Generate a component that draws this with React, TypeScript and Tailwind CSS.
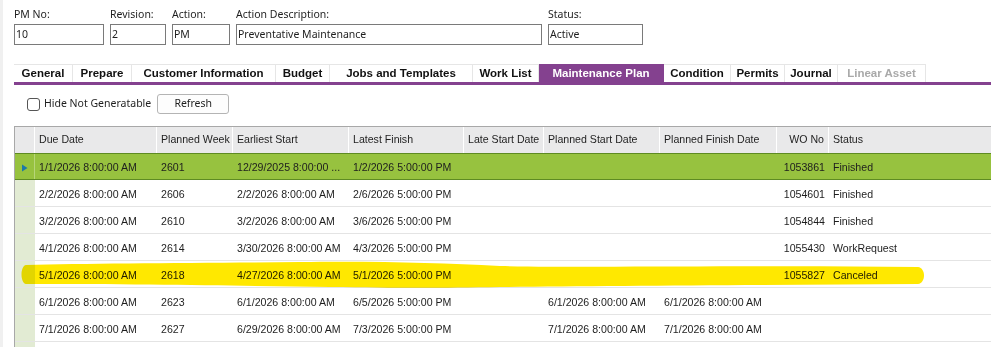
import React from "react";

const labelFont = { fontFamily: '"Noto Sans", "Open Sans", sans-serif' };

type Field = { label: string; value: string; w: string };

const fields: Field[] = [
    { label: "PM No:", value: "10", w: "w-[90px]" },
    { label: "Revision:", value: "2", w: "w-[56px]" },
    { label: "Action:", value: "PM", w: "w-[58px]" },
    { label: "Action Description:", value: "Preventative Maintenance", w: "w-[306px]" },
    { label: "Status:", value: "Active", w: "w-[95px]" },
];

const tabs = [
    { label: "General", w: "w-[59px]" },
    { label: "Prepare", w: "w-[59px]" },
    { label: "Customer Information", w: "w-[144px]" },
    { label: "Budget", w: "w-[54px]" },
    { label: "Jobs and Templates", w: "w-[143px]" },
    { label: "Work List", w: "w-[66px]" },
    { label: "Maintenance Plan", w: "w-[125px]", active: true },
    { label: "Condition", w: "w-[67px]" },
    { label: "Permits", w: "w-[54px]" },
    { label: "Journal", w: "w-[53px]" },
    { label: "Linear Asset", w: "w-[88px]", disabled: true },
];

const cols = "grid grid-cols-[20px_122px_76px_116px_115px_80px_116px_117px_52px_1fr]";

const headers = [
    "Due Date",
    "Planned Week",
    "Earliest Start",
    "Latest Finish",
    "Late Start Date",
    "Planned Start Date",
    "Planned Finish Date",
    "WO No",
    "Status",
];

// due, week, earliest, latest, lateStart, plannedStart, plannedFinish, wo, status
const rows: string[][] = [
    ["1/1/2026 8:00:00 AM", "2601", "12/29/2025 8:00:00 ...", "1/2/2026 5:00:00 PM", "", "", "", "1053861", "Finished"],
    ["2/2/2026 8:00:00 AM", "2606", "2/2/2026 8:00:00 AM", "2/6/2026 5:00:00 PM", "", "", "", "1054601", "Finished"],
    ["3/2/2026 8:00:00 AM", "2610", "3/2/2026 8:00:00 AM", "3/6/2026 5:00:00 PM", "", "", "", "1054844", "Finished"],
    ["4/1/2026 8:00:00 AM", "2614", "3/30/2026 8:00:00 AM", "4/3/2026 5:00:00 PM", "", "", "", "1055430", "WorkRequest"],
    ["5/1/2026 8:00:00 AM", "2618", "4/27/2026 8:00:00 AM", "5/1/2026 5:00:00 PM", "", "", "", "1055827", "Canceled"],
    ["6/1/2026 8:00:00 AM", "2623", "6/1/2026 8:00:00 AM", "6/5/2026 5:00:00 PM", "", "6/1/2026 8:00:00 AM", "6/1/2026 8:00:00 AM", "", ""],
    ["7/1/2026 8:00:00 AM", "2627", "6/29/2026 8:00:00 AM", "7/3/2026 5:00:00 PM", "", "7/1/2026 8:00:00 AM", "7/1/2026 8:00:00 AM", "", ""],
    ["", "", "", "", "", "", "", "", ""],
];

export default function App() {
    return (
        <div
            className="relative w-[991px] h-[347px] overflow-hidden bg-white flex text-[#1e1e1e]"
            style={{ fontFamily: '"Liberation Sans", Arial, sans-serif' }}
        >
            {/* left window edge */}
            <div className="w-[3px] shrink-0 bg-[#f0f0f0]" />

            <div className="flex-1 flex flex-col pl-[11px]">
                {/* ===== header fields ===== */}
                <div className="flex gap-[6px] pt-[7px]" style={labelFont}>
                    {fields.map((f) => (
                        <div key={f.label} className="flex flex-col">
                            <span className="text-[10.5px] leading-[14px] h-[17px]">{f.label}</span>
                            <div className={`${f.w} h-[21px] border border-[#7a7a7a] px-[1px] text-[10.5px] leading-[19px]`}>
                                {f.value}
                            </div>
                        </div>
                    ))}
                </div>

                {/* ===== tabs ===== */}
                <div className="mt-[19px] flex border-b-[3px] border-[#84418f]">
                    {tabs.map((t) => (
                        <div
                            key={t.label}
                            className={`${t.w} h-[18px] flex items-center justify-center text-[11.5px] font-bold whitespace-nowrap border-t border-r ${
                                t.active
                                    ? "bg-[#84418f] text-white border-[#84418f]"
                                    : t.disabled
                                    ? "text-[#a9a9a9] border-[#e6e6e6]"
                                    : "text-[#111] border-[#e6e6e6]"
                            }`}
                        >
                            {t.label}
                        </div>
                    ))}
                </div>

                {/* ===== toolbar ===== */}
                <div className="mt-[9px] flex items-center h-[20px] pl-[13px]" style={labelFont}>
                    <div className="w-[13px] h-[13px] rounded-[3px] border border-[#555] bg-white" />
                    <span className="ml-[4px] text-[10.5px]">Hide Not Generatable</span>
                    <div className="ml-[6px] w-[72px] h-[20px] rounded-[3px] border border-[#b4b4b4] bg-[#fdfdfd] flex items-center justify-center text-[10.5px]">
                        Refresh
                    </div>
                </div>

                {/* ===== grid ===== */}
                <div className="mt-[12px] border-t border-l border-[#a8a8a8] text-[10.6px]">
                    <div className={`${cols} h-[27px] bg-[#e9e9ea] border-b border-[#c8c8c8]`}>
                        <div className="border-r border-white" />
                        {headers.map((h, i) => (
                            <div
                                key={h}
                                className={`flex items-center px-[4px] whitespace-nowrap overflow-hidden ${
                                    i === 7 ? "justify-end" : ""
                                } ${i < headers.length - 1 ? "border-r border-white" : ""}`}
                            >
                                {h}
                            </div>
                        ))}
                    </div>

                    {rows.map((r, ri) => {
                        const sel = ri === 0;
                        return (
                            <div
                                key={ri}
                                className={`${cols} h-[27px] ${
                                    sel
                                        ? "bg-[#97c23f] border-y border-[#5e8b22] -mt-px"
                                        : "border-b border-[#e4e4e4]"
                                }`}
                            >
                                <div
                                    className={`flex items-center justify-center pt-[2px] border-r ${
                                        sel ? "border-[#b7d57a]" : "bg-[#e2ebd3] border-[#e2ebd3]"
                                    }`}
                                >
                                    {sel && (
                                        <svg width="7" height="8" viewBox="0 0 7 8">
                                            <path d="M1 0.5 L6.5 4 L1 7.5 Z" fill="#1c78a8" />
                                        </svg>
                                    )}
                                </div>
                                {r.map((c, ci) => (
                                    <div
                                        key={ci}
                                        className={`flex items-center px-[4px] pt-[3px] whitespace-nowrap overflow-hidden ${
                                            ci === 7 ? "justify-end" : ""
                                        }`}
                                    >
                                        {c}
                                    </div>
                                ))}
                            </div>
                        );
                    })}
                </div>
            </div>

            {/* ===== highlighter stroke over the canceled row ===== */}
            <svg
                className="absolute left-0 top-0 pointer-events-none mix-blend-multiply"
                width="991"
                height="347"
                viewBox="0 0 991 347"
            >
                <path
                    d="M26 265 C 90 263, 200 263, 300 262 C 380 261, 440 263, 500 266 C 600 268, 760 265, 918 267 C 926 268, 926 283, 918 284 C 760 285, 600 286, 500 287 C 440 288, 400 288, 330 287 C 250 286, 150 284, 26 284 C 20 283, 20 266, 26 265 Z"
                    fill="#ffe800"
                />
            </svg>
        </div>
    );
}
